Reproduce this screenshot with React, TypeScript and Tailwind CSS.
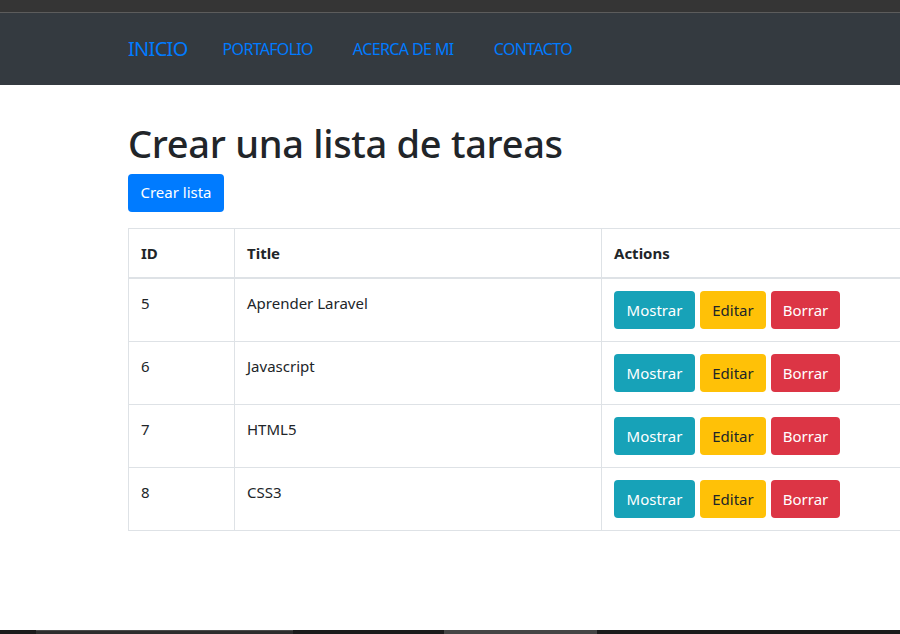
import React from "react";

const tasks = [
  { id: 5, title: "Aprender Laravel" },
  { id: 6, title: "Javascript" },
  { id: 7, title: "HTML5" },
  { id: 8, title: "CSS3" },
];

export default function App() {
  return (
    <div
      className="w-[900px] h-[634px] overflow-hidden flex flex-col bg-white text-[#212529]"
      style={{ fontFamily: '"Noto Sans", "Open Sans", sans-serif' }}
    >
      {/* browser chrome strip */}
      <div className="h-[12px] bg-[#353535] shrink-0" />
      <div className="h-px bg-[#5c5c5c] shrink-0" />

      {/* navbar */}
      <nav className="h-[72px] bg-[#343a40] shrink-0 flex items-center pl-[128px]">
        <a className="text-[20px] text-[#007bff] mr-[35px] tracking-[-0.7px]">INICIO</a>
        <a className="text-[16px] text-[#007bff] mr-[40px] tracking-[-0.7px]">PORTAFOLIO</a>
        <a className="text-[16px] text-[#007bff] mr-[40px] tracking-[-0.6px]">ACERCA DE MI</a>
        <a className="text-[16px] text-[#007bff] tracking-[-0.6px]">CONTACTO</a>
      </nav>

      {/* content */}
      <main className="flex-1 pl-[128px] pt-[36px]">
        <h1 className="text-[38px] font-medium leading-[1.2] tracking-[-0.3px] mb-[7px]">
          Crear una lista de tareas
        </h1>
        <button className="h-[38px] w-[96px] rounded-[4px] bg-[#007bff] text-white text-[15px]">
          Crear lista
        </button>

        <table className="mt-[16px] w-[900px] border-collapse text-[15px]">
          <thead>
            <tr className="h-[50px]">
              <th className="w-[106px] border border-[#dee2e6] border-b-2 px-[12px] text-left font-bold align-middle">ID</th>
              <th className="w-[367px] border border-[#dee2e6] border-b-2 px-[12px] text-left font-bold align-middle">Title</th>
              <th className="border border-[#dee2e6] border-b-2 px-[12px] text-left font-bold align-middle">Actions</th>
            </tr>
          </thead>
          <tbody>
            {tasks.map((t) => (
              <tr key={t.id} className="h-[63px]">
                <td className="border border-[#dee2e6] px-[12px] pt-[13px] align-top">{t.id}</td>
                <td className="border border-[#dee2e6] px-[12px] pt-[13px] align-top">{t.title}</td>
                <td className="border border-[#dee2e6] px-[12px] py-[12px] align-top">
                  <div className="flex gap-[5px]">
                    <button className="h-[38px] w-[81px] rounded-[4px] bg-[#17a2b8] text-white text-[15px]">Mostrar</button>
                    <button className="h-[38px] w-[66px] rounded-[4px] bg-[#ffc107] text-[#212529] text-[15px]">Editar</button>
                    <button className="h-[38px] w-[69px] rounded-[4px] bg-[#dc3545] text-white text-[15px]">Borrar</button>
                  </div>
                </td>
              </tr>
            ))}
          </tbody>
        </table>
      </main>

      {/* taskbar strip */}
      <div className="h-[4px] shrink-0 flex bg-[#1b1b1b]">
        <div className="w-[36px]" />
        <div className="w-[257px] bg-[#2d2d2d] border-t border-[#4a4a4a]" />
        <div className="w-[151px]" />
        <div className="w-[153px] bg-[#454545]" />
      </div>
    </div>
  );
}
